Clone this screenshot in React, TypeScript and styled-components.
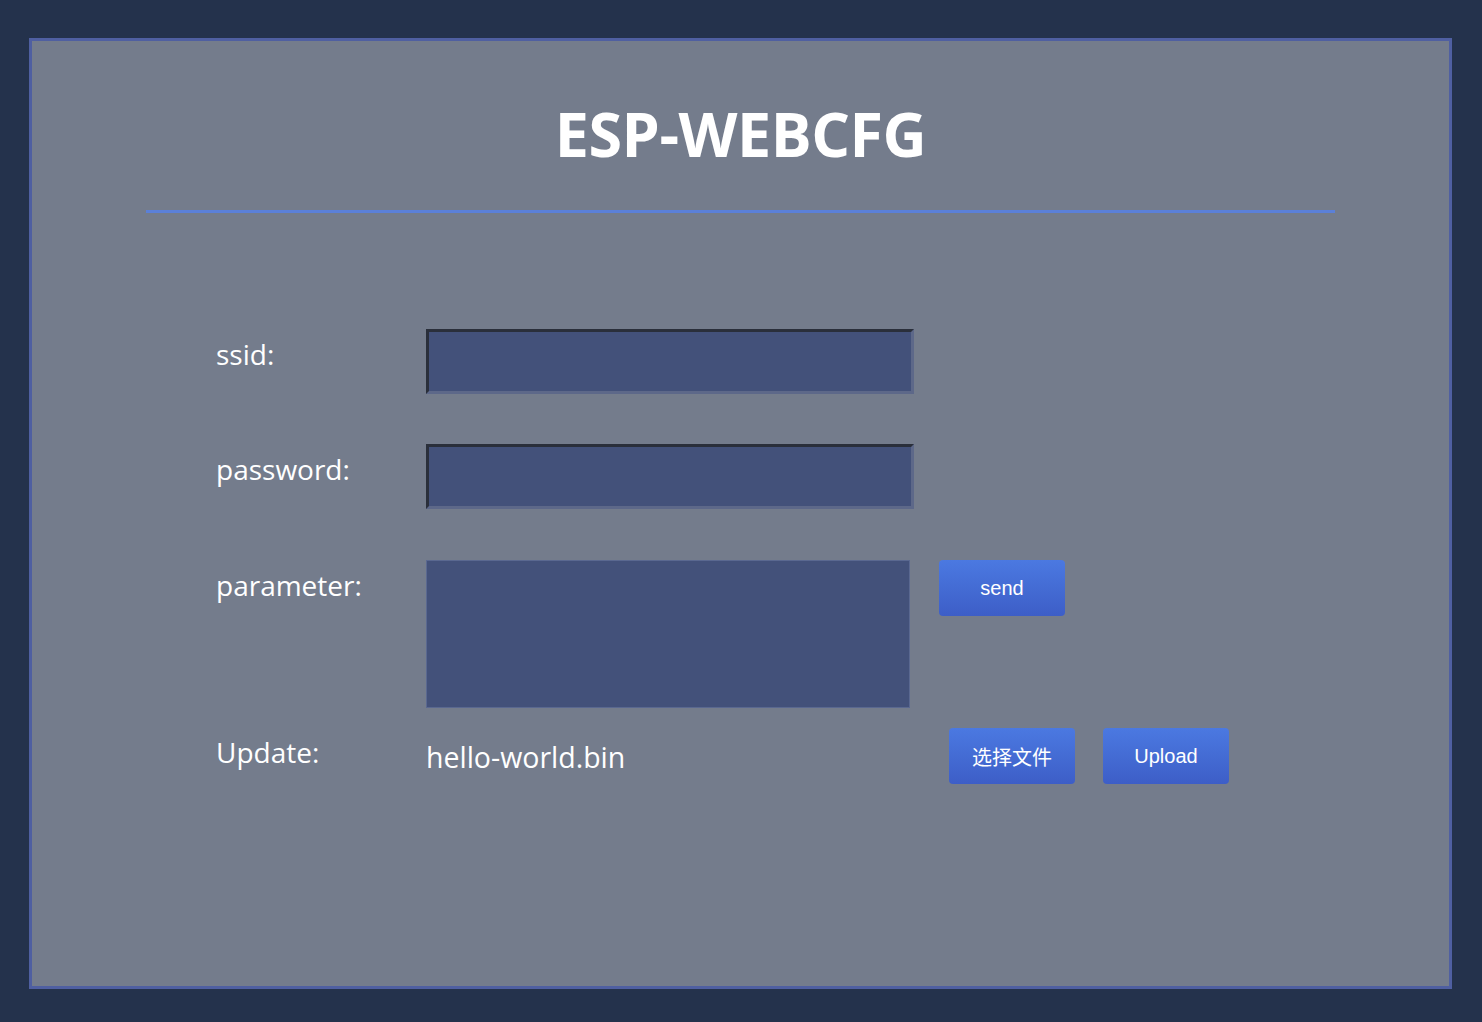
import styled, { createGlobalStyle } from 'styled-components';

const GlobalStyle = createGlobalStyle`
  html, body {
    margin: 0;
    padding: 0;
    background: #24324c;
  }
  body {
    font-family: "Open Sans", "Noto Sans", "Noto Sans CJK SC", sans-serif;
  }
`;

const StyledPage = styled.div`
  box-sizing: border-box;
  width: 1482px;
  height: 1022px;
  padding: 38px 30px 33px 29px;
  display: flex;
`;

const StyledPanel = styled.div`
  flex: 1;
  box-sizing: border-box;
  background: #747c8c;
  border: 3px solid #4f5fa1;
  display: flex;
  flex-direction: column;
  align-items: center;
`;

const StyledTitle = styled.h1`
  margin: 53px 0 0;
  font-size: 61px;
  font-weight: 700;
  line-height: 80px;
  color: #ffffff;
  letter-spacing: -0.5px;
`;

const StyledDivider = styled.div`
  margin-top: 36px;
  width: 1189px;
  height: 3px;
  background: #5b80d8;
`;

const StyledForm = styled.div`
  align-self: stretch;
  margin: 116px 0 0 184px;
  display: flex;
  flex-direction: column;
`;

const StyledRow = styled.div<{ $gap?: number }>`
  display: grid;
  grid-template-columns: 210px auto;
  align-items: start;
  justify-items: start;
  margin-top: ${(p) => p.$gap ?? 0}px;
`;

const StyledLabel = styled.label<{ $offset?: number }>`
  font-size: 28px;
  line-height: 38px;
  color: #ffffff;
  padding-top: ${(p) => p.$offset ?? 6}px;
`;

const StyledInput = styled.input`
  box-sizing: border-box;
  width: 488px;
  height: 65px;
  margin: 0;
  background: #43517a;
  border: 3px solid;
  border-color: #2a2f3b #5d6889 #5d6889 #2a2f3b;
  color: #ffffff;
  font-size: 24px;
  padding: 0 10px;
  outline: none;
`;

const StyledCell = styled.div`
  display: flex;
  align-items: flex-start;
  gap: 29px;
`;

const StyledTextArea = styled.textarea`
  box-sizing: border-box;
  width: 484px;
  height: 148px;
  margin: 0;
  background: #43517a;
  border: 1px solid #5a6890;
  resize: none;
  outline: none;
  color: #ffffff;
  font-size: 20px;
`;

const StyledButton = styled.button`
  box-sizing: border-box;
  width: 126px;
  height: 56px;
  border: none;
  border-radius: 4px;
  background: linear-gradient(180deg, #4b79e1 0%, #3d5ec7 100%);
  color: #ffffff;
  font-family: "Liberation Sans", "Noto Sans CJK SC", sans-serif;
  font-size: 20px;
  cursor: pointer;
`;

const StyledFileName = styled.span`
  font-size: 28.5px;
  line-height: 38px;
  color: #ffffff;
  width: 495px;
  padding-top: 10px;
`;

const StyledUpdateCell = styled.div`
  display: flex;
  align-items: flex-start;
  gap: 28px;
`;

export default function App() {
  return (
    <>
      <GlobalStyle />
      <StyledPage>
        <StyledPanel>
          <StyledTitle>ESP-WEBCFG</StyledTitle>
          <StyledDivider />
          <StyledForm>
            <StyledRow>
              <StyledLabel>ssid:</StyledLabel>
              <StyledInput type="text" />
            </StyledRow>
            <StyledRow $gap={50}>
              <StyledLabel>password:</StyledLabel>
              <StyledInput type="password" />
            </StyledRow>
            <StyledRow $gap={51}>
              <StyledLabel>parameter:</StyledLabel>
              <StyledCell>
                <StyledTextArea />
                <StyledButton>send</StyledButton>
              </StyledCell>
            </StyledRow>
            <StyledRow $gap={20}>
              <StyledLabel $offset={5}>Update:</StyledLabel>
              <StyledUpdateCell>
                <StyledFileName>hello-world.bin</StyledFileName>
                <StyledButton>选择文件</StyledButton>
                <StyledButton>Upload</StyledButton>
              </StyledUpdateCell>
            </StyledRow>
          </StyledForm>
        </StyledPanel>
      </StyledPage>
    </>
  );
}
